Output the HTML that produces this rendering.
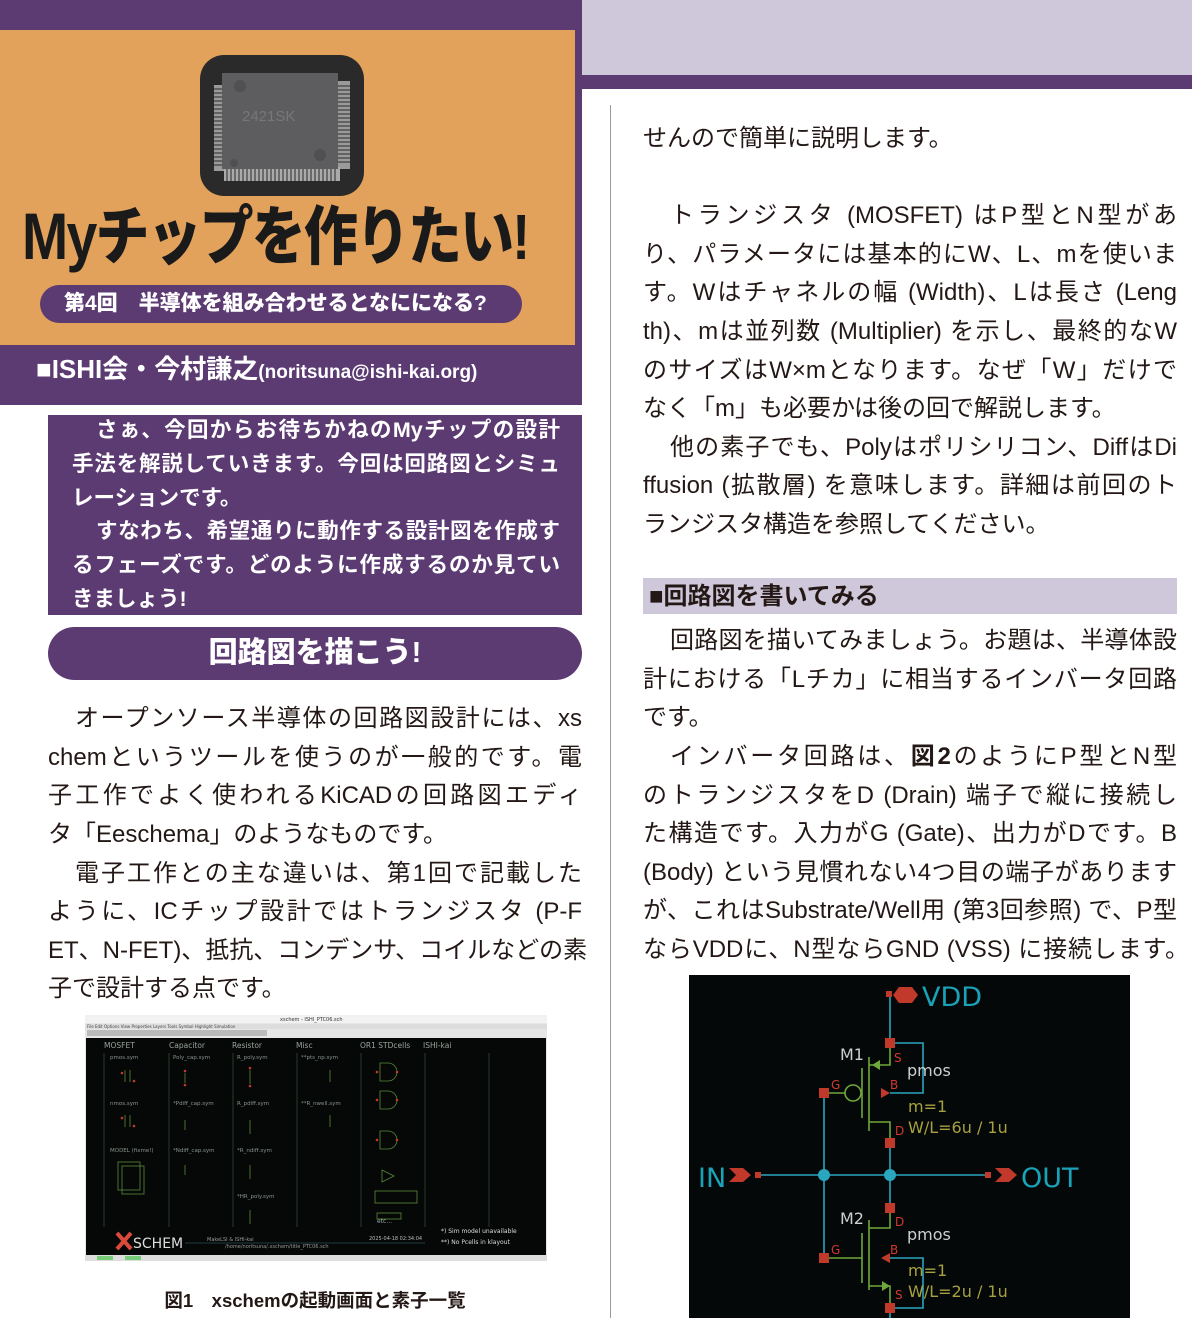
<!DOCTYPE html>
<html lang="ja"><head><meta charset="utf-8">
<style>
*{margin:0;padding:0;box-sizing:border-box}
html,body{width:1192px;height:1318px;overflow:hidden;background:#fff}
body{position:relative;font-family:"Liberation Sans","Noto Sans CJK JP",sans-serif;color:#231815}
.a{position:absolute}
.txt{position:absolute;font-size:24px;line-height:38.65px}
.l{display:block;height:38.65px;white-space:nowrap;text-align:justify;text-align-last:justify}
.e{text-align:left;text-align-last:left}
.in{padding-left:27px}
.intro{position:absolute;left:72px;top:414px;width:488px;color:#fff;font-weight:bold;font-size:21.5px;line-height:33.8px}
.intro .l{height:33.8px}
.intro .in{padding-left:24px}
</style></head><body>
<div class="a" style="left:0;top:0;width:582px;height:405px;background:#5c3b73"></div>
<div class="a" style="left:0;top:30px;width:575px;height:315px;background:#e3a25c"></div>
<div class="a" style="left:582px;top:0;width:610px;height:75px;background:#cfc7da"></div>
<div class="a" style="left:582px;top:75px;width:610px;height:14px;background:#5c3b73"></div>
<div class="a" style="left:610px;top:105px;width:1px;height:1213px;background:#9a9a9a"></div>

<svg class="a" style="left:200px;top:55px" width="164" height="141" viewBox="0 0 164 141">
<rect x="0" y="0" width="164" height="141" rx="24" fill="#2a2a2a"/>
<rect x="14" y="30" width="14" height="86" fill="#9a9a9a"/>
<rect x="136" y="26" width="14" height="88" fill="#9a9a9a"/>
<rect x="24" y="112" width="116" height="14" fill="#aaa"/>
<g stroke="#2a2a2a" stroke-width="1">
<path d="M14 34H28M14 38H28M14 42H28M14 46H28M14 50H28M14 54H28M14 58H28M14 62H28M14 66H28M14 70H28M14 74H28M14 78H28M14 82H28M14 86H28M14 90H28M14 94H28M14 98H28M14 102H28M14 106H28M14 110H28"/>
<path d="M136 31H150M136 35H150M136 39H150M136 43H150M136 47H150M136 51H150M136 55H150M136 59H150M136 63H150M136 67H150M136 71H150M136 75H150M136 79H150M136 83H150M136 87H150M136 91H150M136 95H150M136 99H150M136 103H150M136 107H150"/>
<path d="M27 112V126M31 112V126M35 112V126M39 112V126M43 112V126M47 112V126M51 112V126M55 112V126M59 112V126M63 112V126M67 112V126M71 112V126M75 112V126M79 112V126M83 112V126M87 112V126M91 112V126M95 112V126M99 112V126M103 112V126M107 112V126M111 112V126M115 112V126M119 112V126M123 112V126M127 112V126M131 112V126M135 112V126"/>
</g>
<rect x="22" y="18" width="116" height="96" fill="#5d5d5f"/>
<circle cx="40" cy="31" r="6" fill="#505052"/><circle cx="120" cy="100" r="6" fill="#505052"/><circle cx="34" cy="108" r="4" fill="#505052"/>
<text x="42" y="66" font-family="Liberation Sans" font-size="15" fill="#777">2421SK</text>
</svg>

<div class="a" style="left:22px;top:196px;font-size:64px;font-weight:900;line-height:80px;letter-spacing:-2px;color:#1a1a1a;white-space:nowrap;transform:scaleX(0.84);transform-origin:0 0"><span style="font-family:'Liberation Sans';font-weight:bold;font-size:66px">My</span>チップを作りたい!</div>
<div class="a" style="left:40px;top:285px;width:482px;height:38px;border-radius:19px;background:#5c3b73;color:#fff;font-weight:900;font-size:21px;line-height:38px;padding-left:24px;white-space:nowrap">第4回　半導体を組み合わせるとなにになる?</div>
<div class="a" style="left:36px;top:348px;color:#fff;font-weight:bold;font-size:26px;line-height:42px;white-space:nowrap">■ISHI会・今村謙之<span style="font-size:19px">(noritsuna@ishi-kai.org)</span></div>

<div class="a" style="left:48px;top:415px;width:534px;height:200px;background:#5c3b73"></div>
<div class="intro">
<span class="l in">さぁ、今回からお待ちかねのMyチップの設計</span>
<span class="l">手法を解説していきます。今回は回路図とシミュ</span>
<span class="l e">レーションです。</span>
<span class="l in">すなわち、希望通りに動作する設計図を作成す</span>
<span class="l">るフェーズです。どのように作成するのか見てい</span>
<span class="l e">きましょう!</span>
</div>
<div class="a" style="left:48px;top:627px;width:534px;height:53px;border-radius:27px;background:#5c3b73;color:#fff;font-weight:900;font-size:29px;line-height:53px;text-align:center">回路図を描こう!</div>

<div class="txt" style="left:48px;top:700px;width:534px">
<span class="l in">オープンソース半導体の回路図設計には、xs</span>
<span class="l">chemというツールを使うのが一般的です。電</span>
<span class="l">子工作でよく使われるKiCADの回路図エディ</span>
<span class="l e">タ「Eeschema」のようなものです。</span>
<span class="l in">電子工作との主な違いは、第1回で記載した</span>
<span class="l">ように、ICチップ設計ではトランジスタ (P-F</span>
<span class="l">ET、N-FET)、抵抗、コンデンサ、コイルなどの素</span>
<span class="l e">子で設計する点です。</span>
</div>

<svg class="a" style="left:85px;top:1015px" width="462" height="246" viewBox="0 0 462 246" font-family="DejaVu Sans,sans-serif">
<rect width="462" height="246" fill="#e6e6e6"/>
<rect x="0" y="0" width="462" height="8" fill="#f2f2f2"/>
<text x="195" y="6" font-size="5" fill="#333">xschem - ISHI_PTC06.sch</text>
<rect x="0" y="9" width="462" height="5" fill="#ddd"/>
<text x="2" y="13" font-size="4" fill="#444">File Edit Options View Properties Layers Tools Symbol Highlight Simulation</text>
<rect x="2" y="15" width="180" height="6" fill="#bbb"/>
<rect x="1" y="23" width="460" height="217" fill="#060808"/>
<g fill="#9aa39a" font-size="7.5">
<text x="19" y="33">MOSFET</text><text x="84" y="33">Capacitor</text><text x="147" y="33">Resistor</text><text x="211" y="33">Misc</text><text x="275" y="33">OR1 STDcells</text><text x="338" y="33">ISHI-kai</text>
</g>
<g fill="#8a948a" font-size="5.5">
<text x="25" y="44">pmos.sym</text><text x="88" y="44">Poly_cap.sym</text><text x="152" y="44">R_poly.sym</text><text x="216" y="44">**pts_np.sym</text>
<text x="25" y="90">nmos.sym</text><text x="88" y="90">*Pdiff_cap.sym</text><text x="152" y="90">R_pdiff.sym</text><text x="216" y="90">**R_nwell.sym</text>
<text x="25" y="137">MODEL (fixme!)</text><text x="88" y="137">*Ndiff_cap.sym</text><text x="152" y="137">*R_ndiff.sym</text>
<text x="152" y="183">*HR_poly.sym</text>
</g>
<g stroke="#2f4a2f" stroke-width="0.8">
<path d="M19 38V212M84 38V212M148 38V212M212 38V212M276 38V212M340 38V212M404 38V212"/>
</g>
<g stroke="#5a8a3a" fill="none" stroke-width="0.8">
<path d="M40 55v12M45 55v12M100 58v10M165 55v14M165 105v14M165 150v14M165 195v14M100 105v10M100 150v10M40 100v12M45 100v12M245 55v12M245 100v12"/>
<path d="M295 48h8a9 9 0 0 1 0 18h-8zM295 76h8a9 9 0 0 1 0 18h-8zM295 116h8a9 9 0 0 1 0 18h-8zM297 155l12 6-12 6z"/>
<rect x="290" y="176" width="42" height="12"/><rect x="292" y="198" width="24" height="6"/>
<rect x="33" y="147" width="22" height="28"/><rect x="37" y="151" width="22" height="28"/>
</g>
<g fill="#c0392b"><circle cx="37" cy="58" r="1.3"/><circle cx="49" cy="66" r="1.3"/><circle cx="37" cy="103" r="1.3"/><circle cx="49" cy="111" r="1.3"/><circle cx="292" cy="57" r="1.3"/><circle cx="312" cy="57" r="1.3"/><circle cx="292" cy="85" r="1.3"/><circle cx="312" cy="85" r="1.3"/><circle cx="292" cy="125" r="1.3"/><circle cx="312" cy="125" r="1.3"/><circle cx="165" cy="53" r="1.3"/><circle cx="165" cy="71" r="1.3"/><circle cx="100" cy="56" r="1.3"/><circle cx="100" cy="70" r="1.3"/></g>
<text x="292" y="208" font-size="6" fill="#9aa">etc...</text>
<path d="M32 218l14 16M46 218l-14 16" stroke="#d84a3a" stroke-width="4"/>
<text x="48" y="233" font-size="14" fill="#ddd">SCHEM</text>
<text x="122" y="226" font-size="5" fill="#999">MakeLSI &amp; ISHI-kai</text>
<text x="140" y="233" font-size="5" fill="#999">/home/noritsuna/.xschem/title_PTC06.sch</text>
<text x="284" y="225" font-size="5" fill="#bbb">2025-04-18  02:34:04</text>
<text x="356" y="218" font-size="6" fill="#ddd">*) Sim model unavailable</text>
<text x="356" y="229" font-size="6" fill="#ddd">**) No Pcells in klayout</text>
<path d="M100 228H340" stroke="#3a6a7a" stroke-width="0.6"/>
<rect x="0" y="240" width="462" height="6" fill="#ddd"/>
<rect x="12" y="241" width="16" height="4" fill="#7c7"/><rect x="40" y="241" width="16" height="4" fill="#7c7"/>
</svg>
<div class="a" style="left:0;top:1288px;width:630px;text-align:center;font-weight:bold;font-size:18.5px;line-height:26px">図1　xschemの起動画面と素子一覧</div>

<div class="txt" style="left:643px;top:120px;width:534px"><span class="l e">せんので簡単に説明します。</span></div>
<div class="txt" style="left:643px;top:197px;width:534px">
<span class="l in">トランジスタ (MOSFET) はP型とN型があ</span>
<span class="l">り、パラメータには基本的にW、L、mを使いま</span>
<span class="l">す。Wはチャネルの幅 (Width)、Lは長さ (Leng</span>
<span class="l">th)、mは並列数 (Multiplier) を示し、最終的なW</span>
<span class="l">のサイズはW×mとなります。なぜ「W」だけで</span>
<span class="l e">なく「m」も必要かは後の回で解説します。</span>
<span class="l in">他の素子でも、Polyはポリシリコン、DiffはDi</span>
<span class="l">ffusion (拡散層) を意味します。詳細は前回のト</span>
<span class="l e">ランジスタ構造を参照してください。</span>
</div>
<div class="a" style="left:643px;top:578px;width:534px;height:36px;background:#cfc7da;font-weight:bold;font-size:24px;line-height:38px;padding-left:6px">■回路図を書いてみる</div>
<div class="txt" style="left:643px;top:622px;width:534px">
<span class="l in">回路図を描いてみましょう。お題は、半導体設</span>
<span class="l">計における「Lチカ」に相当するインバータ回路</span>
<span class="l e">です。</span>
<span class="l in">インバータ回路は、<b>図2</b>のようにP型とN型</span>
<span class="l">のトランジスタをD (Drain) 端子で縦に接続し</span>
<span class="l">た構造です。入力がG (Gate)、出力がDです。B</span>
<span class="l">(Body) という見慣れない4つ目の端子があります</span>
<span class="l">が、これはSubstrate/Well用 (第3回参照) で、P型</span>
<span class="l" style="width:546px">ならVDDに、N型ならGND (VSS) に接続します。</span>
</div>

<svg class="a" style="left:689px;top:975px" width="441" height="343" viewBox="689 975 441 343" font-family="DejaVu Sans,sans-serif">
<rect x="689" y="975" width="441" height="343" fill="#040808"/>
<g stroke="#2aa6be" stroke-width="1.6" fill="none">
<path d="M890 995V1043M890 1043H923V1093H890"/>
<path d="M824 1093V1258M890 1143V1208M758 1175H824M824 1175H988M890 1258H923V1308H890M890 1308V1318"/>
</g>
<g stroke="#6fa83a" stroke-width="1.6" fill="none">
<path d="M869 1057V1131M862 1068V1118M869 1065H890V1043M869 1122H890V1143"/>
<circle cx="853" cy="1093" r="8"/><path d="M824 1093H845"/>
<path d="M869 1220V1290M862 1233V1283M869 1228H890V1208M824 1258H862M869 1286H890V1308"/>
</g>
<g fill="#6fa83a"><path d="M872 1065l8-5v10z"/><path d="M890 1286l-8-5v10z"/></g>
<g fill="#c0392b">
<path d="M893 995l6-8h13l6 8-6 8h-13z"/>
<rect x="886" y="991" width="6" height="6"/>
<rect x="885" y="1038" width="10" height="10"/><rect x="885" y="1138" width="10" height="10"/>
<rect x="885" y="1203" width="10" height="10"/><rect x="885" y="1303" width="10" height="10"/>
<rect x="819" y="1088" width="10" height="10"/><rect x="819" y="1253" width="10" height="10"/>
<path d="M881 1088l9 5-9 5z"/><path d="M890 1253l-9 5 9 5z"/>
<path d="M729 1168h14l8 7-8 7h-14l7-7z"/><rect x="755" y="1172" width="6" height="6"/>
<path d="M995 1168h14l8 7-8 7h-14l7-7z"/><rect x="985" y="1172" width="6" height="6"/>
</g>
<g fill="#2aa6be"><circle cx="824" cy="1175" r="6"/><circle cx="890" cy="1175" r="6"/></g>
<g fill="#d23a2e" font-size="12">
<text x="894" y="1062">S</text><text x="890" y="1089">B</text><text x="831" y="1089">G</text><text x="895" y="1135">D</text>
<text x="895" y="1226">D</text><text x="890" y="1254">B</text><text x="831" y="1254">G</text><text x="895" y="1299">S</text>
</g>
<g fill="#1aa3b8" font-size="27"><text x="922" y="1006">VDD</text><text x="698" y="1187">IN</text><text x="1021" y="1187">OUT</text></g>
<g fill="#cfcfcf" font-size="16"><text x="840" y="1060">M1</text><text x="840" y="1224">M2</text><text x="907" y="1076">pmos</text><text x="907" y="1240">pmos</text></g>
<g fill="#a8a040" font-size="16"><text x="908" y="1112">m=1</text><text x="908" y="1133">W/L=6u / 1u</text><text x="908" y="1276">m=1</text><text x="908" y="1297">W/L=2u / 1u</text></g>
</svg>
</body></html>
